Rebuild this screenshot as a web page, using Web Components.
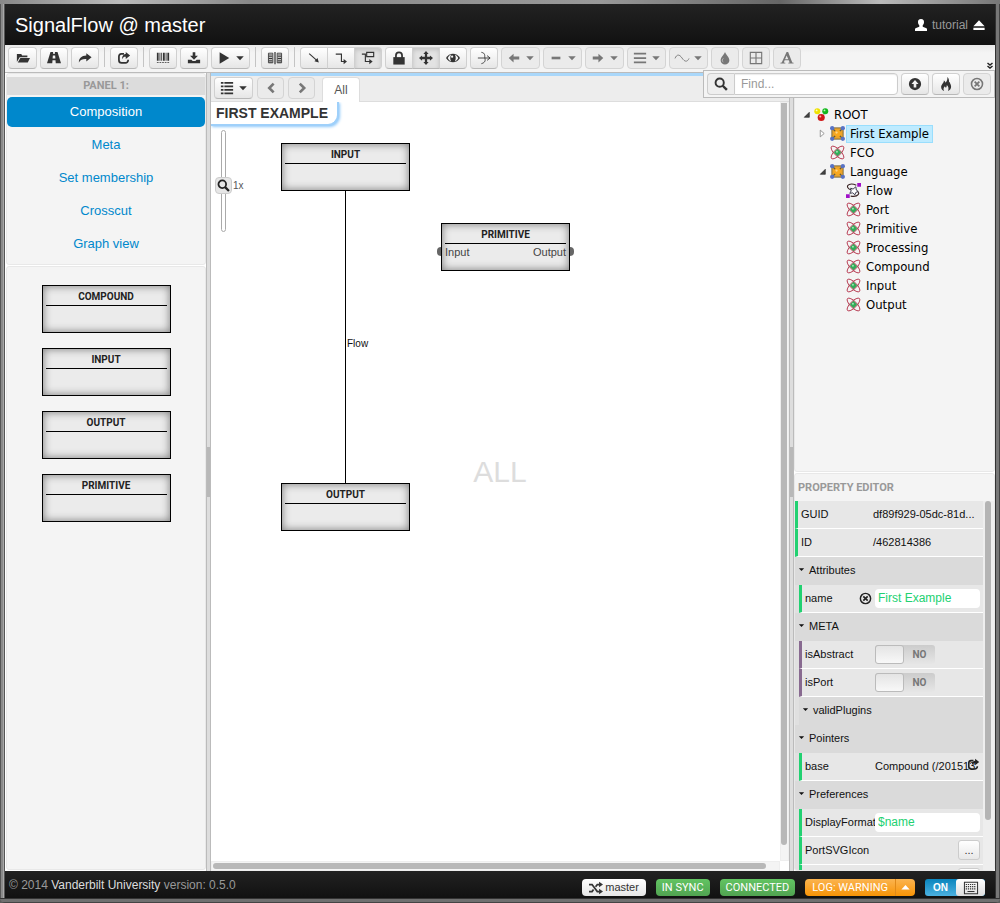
<!DOCTYPE html>
<html lang="en">
<head>
<meta charset="utf-8">
<title>SignalFlow @ master</title>
<style>
  html, body { height: 100%; margin: 0; }
  body { font: 12px/16px "Liberation Sans", Arial, sans-serif; color: #333; background: #5c5c5c; }
</style>
</head>
<body>
<sf-app></sf-app>
<script>
const define = (name, css, html, setup) => {
  const t = document.createElement('template');
  customElements.define(name, class extends HTMLElement {
    connectedCallback() {
      if (this.shadowRoot) return;
      t.innerHTML = `<style>*{box-sizing:border-box}:host{display:block;box-sizing:border-box}${css}</style>` +
        (typeof html === 'function' ? html(this) : html);
      this.attachShadow({ mode: 'open' }).appendChild(t.content.cloneNode(true));
      if (setup) setup(this);
    }
  });
};

/* ---------- icons, 16 x 16 grid ---------- */
const ATOM = `<g fill="none" stroke="#b5374f" stroke-width="1"><ellipse cx="8" cy="8" rx="9" ry="3.4" transform="rotate(45 8 8)"/><ellipse cx="8" cy="8" rx="9" ry="3.4" transform="rotate(-45 8 8)"/></g><path d="M8 4.5L11.5 8 8 11.5 4.5 8z" fill="#2fae58" stroke="#2f9a50"/><circle cx="7.4" cy="7.2" r="1" fill="#a5e8b8"/>`;
const ICONS = {
  folder: '<path d="M1 12.5V3.5h5l1 1.5h6v2H4.2z"/><path d="M5 8h11l-2.6 5H2z"/>',
  road: '<path d="M4 1h3l-.2 2h2.400L9 1h3l4 13H10l-.3-3.500H6.300L6 14H0zM6.700 5L6.400 8.500h3.200L9.300 5z" fill-rule="evenodd"/>',
  share: '<path d="M9.500 2.500L15.500 7.200 9.500 12V9.200C5.500 8.900 3 10 1 13 1 8.500 4 5.300 9.500 5.200z"/>',
  export: '<path d="M8 3.200H5A3 3 0 0 0 2.200 6v4.500a3 3 0 0 0 3 3h4.500a3 3 0 0 0 3-3V10" fill="none" stroke="currentColor" stroke-width="2"/><path d="M10 1l5 4-5 4V6.600C8 6.500 7 7 6 9.500 5.500 6 7.500 3.600 10 3.500z"/>',
  barcode: '<path d="M1 2h2v9H1zM4 2h1v9H4zM6 2h1v9H6zM8 2h2v9H8zM11 2h1v9h-1zM13 2h2v9h-2zM1 12.500h2v1H1zM4 12.500h2v1H4zM7 12.500h2v1H7zM10 12.500h2v1h-2zM13 12.500h2v1h-2z"/>',
  download: '<path d="M6.500 1.500h3v4h3L8 10 3.500 5.500h3z"/><path d="M1 10h4l1.500 1.500h3L11 10h4v4H1z"/>',
  play: '<path d="M3 1.500L14 8 3 14.500z"/>',
  columns: '<path d="M.5 2.500h5v11h-5zM10.500 2.500h5v11h-5z" fill="none" stroke="currentColor"/><path d="M7.300 1h1.400v14H7.300zM1 4h4v1H1zM1 6h4v1H1zM1 8h4v1H1zM1 10h4v1H1zM1 12h4v1H1zM11 4h4v1h-4zM11 6h4v1h-4zM11 8h4v1h-4zM11 10h4v1h-4zM11 12h4v1h-4z"/>',
  diag: '<path d="M2.500 3l9 8" fill="none" stroke="currentColor" stroke-width="1.200"/><path d="M13.500 13l-5-1.200L12 8z"/>',
  elbow: '<path d="M2 3.500h6.500v8.500H12" fill="none" stroke="currentColor" stroke-width="1.300"/><path d="M11 9l3.800 3-3.800 3z"/>',
  elbowbox: '<path d="M1 3.500h4v8.500h6M6.500 1.500h8v5h-8z" fill="none" stroke="currentColor" stroke-width="1.300"/><path d="M9.500 9l3.800 3-3.800 3z"/>',
  lock: '<path d="M1.500 7h13v8.500h-13z"/><path d="M4.500 8V5a3.500 3.500 0 0 1 7 0v3" fill="none" stroke="currentColor" stroke-width="2"/>',
  move: '<path d="M8 0l3 3.500H9.300v3.200h3.200V5L16 8l-3.500 3V9.300H9.300v3.200H11L8 16l-3-3.500h1.700V9.300H3.500V11L0 8l3.500-3v1.700h3.200V3.500H5z"/>',
  eye: '<path d="M0 8c3.500-6.500 12.500-6.500 16 0-3.500 6.500-12.500 6.500-16 0z"/><path d="M2 8c2-3.500 3-3.800 4-4-1.500 2-1.500 6 0 8-1.500-.5-3-2-4-4zM14 8c-1-2-2.500-3.500-4-4 1.500 2 1.500 6 0 8 1.500-.5 3-2 4-4z" fill="#f4f4f4"/><circle cx="7" cy="6.500" r="1.300" fill="#f4f4f4"/>',
  cross: '<path d="M1 8h13.500M5 1.500c5 1 3.500 4 4 6.500S10 13 5 14.500" fill="none" stroke="currentColor"/><path d="M11.500 5.300L15 8l-3.500 2.700" fill="none" stroke="currentColor"/>',
  left: '<path d="M7.500 3L2 8l5.500 5V9.800H14V6.200H7.500z"/>',
  right: '<path d="M8.500 3L14 8l-5.500 5V9.800H2V6.200h6.500z"/>',
  dash: '<path d="M3 6.500h10v3H3z"/>',
  bars: '<path d="M1 2h14v2H1zM1 7h14v2H1zM1 12h14v2H1z"/>',
  wave: '<path d="M0 8.500C2 3.500 5 3.500 8 8s6 5 8 .500" fill="none" stroke="currentColor"/>',
  drop: '<path d="M8 1c1 3 5 6 5 9.500a5 5 0 0 1-10 0C3 7 7 4 8 1z"/><path d="M6 8.500c-1.500 1.500-1.300 3.500 0 4" fill="none" stroke="#ccc"/>',
  grid: '<path d="M1.500 1.500h13v13h-13zM8 2v12M2 8h12" fill="none" stroke="currentColor" stroke-width="1.300"/>',
  letter: '<path d="M7.500 1h1.800L14 13l1.500.400v1H9.500v-1l1.500-.400-1-2.500H5.300L4.400 13l1.700.400v1H.500v-1L2 13zM7.600 5L5.800 9.500h3.700z" fill-rule="evenodd"/>',
  search: '<circle cx="6.500" cy="6.500" r="4.700" fill="none" stroke="currentColor" stroke-width="2.200"/><path d="M10 10l4.700 4.700" stroke="currentColor" stroke-width="2.800"/>',
  upcircle: '<path d="M8 1a7 7 0 1 0 0 14A7 7 0 0 0 8 1zM8 3.500L12 8H9.500v4h-3V8H4z" fill-rule="evenodd"/>',
  fire: '<path d="M9.500 0c.5 3-.5 5-2 6.500C7 5 6.300 4.200 5.500 4c.5 3-3.500 4.500-3 8 .2 2 1.500 3.500 3.500 4-1.500-2-.8-4 .8-5.500.2 1 .6 1.500 1.200 1.800.8-1.300 1-2.300.9-3.300 2 1.700 2.600 4.500 1.200 7 2.500-.8 4-3 3.700-5.500-.3-2.300-1.500-3-1.500-5-1 .6-1.300 1.500-1.300 2.500C12 5 11.500 1.500 9.500 0z"/>',
  remove: '<circle cx="8" cy="8" r="6.300" fill="none" stroke="currentColor" stroke-width="1.800"/><path d="M5.300 5.300l5.400 5.400M10.700 5.300l-5.400 5.400" stroke="currentColor" stroke-width="2"/>',
  list: '<path d="M1 1h3v2H1zM5 1h10v2H5zM1 5h3v2H1zM5 5h10v2H5zM1 9h3v2H1zM5 9h10v2H5zM1 13h3v2H1zM5 13h10v2H5z"/>',
  chevl: '<path d="M11 3L6 8l5 5" fill="none" stroke="currentColor" stroke-width="3"/>',
  chevr: '<path d="M5.500 3l5 5-5 5" fill="none" stroke="currentColor" stroke-width="3"/>',
  more: '<path d="M3 2l5 4 5-4M3 8l5 4 5-4" fill="none" stroke="currentColor" stroke-width="3"/>',
  user: '<path d="M8 0c3 0 4.300 2 4 4.700-.2 2-1 3-1.700 3.700v2c2 .8 5.200 1.500 5.700 2.600V16H0v-3c.5-1.100 3.700-1.800 5.700-2.600v-2C5 7.700 4.200 6.700 4 4.700 3.700 2 5 0 8 0z"/>',
  eject: '<path d="M8 1.500l7.500 8H.5zM.5 11.500h15v3H.5z"/>',
  random: '<path d="M0 4h3.500l6 8H12M0 12h3.500l1.700-2.300M7.500 6.500L9.500 4H12" fill="none" stroke="currentColor" stroke-width="2"/><path d="M11.500.8L16 4l-4.500 3.200zM11.500 8.800L16 12l-4.500 3.200z"/>',
  caret: '<path d="M2 5h12l-6 6.500z"/>',
  caretup: '<path d="M2 11h12L8 4.500z"/>',
  keyboard: '<path d="M.5 1.500h15v13H.5z" fill="none" stroke="currentColor" stroke-width="1.200"/><path d="M2 4h12M2 6.500h12M2 9h12" stroke="currentColor" stroke-width="1.300" stroke-dasharray="1.400 1"/><path d="M4 12h8" stroke="currentColor" stroke-width="1.300"/>',
  open: '<path d="M13 4v9H4z" fill="#444" stroke="#111"/>',
  closed: '<path d="M4 2l7 6-7 6z" fill="#fff" stroke="#888" stroke-width="1.500"/>',
  root: '<path d="M3 4l5 8 5-8" stroke="#999" fill="none"/><circle cx="3.500" cy="4.500" r="3.200" fill="#efe100"/><circle cx="12" cy="4.500" r="3.200" fill="#12b81c"/><circle cx="7.700" cy="11.200" r="3.800" fill="#d01818"/><circle cx="2.800" cy="3.600" r="1" fill="#fffcc0"/><circle cx="11.200" cy="3.600" r="1" fill="#b6ffb6"/><circle cx="6.700" cy="10.200" r="1.100" fill="#ffb0a8"/>',
  model: '<path d="M2 2h12v12H2z" fill="#eba42a" stroke="#77683c"/><path d="M2 2l12 12M14 2L2 14" stroke="#5c5748" stroke-width="1.500"/><circle cx="8" cy="8" r="3.400" fill="#f9a81e"/><circle cx="7" cy="7" r="1.200" fill="#ffd68a"/><g fill="#5873c4"><circle cx="2.300" cy="2.300" r="2.300"/><circle cx="13.700" cy="2.300" r="2.300"/><circle cx="2.300" cy="13.700" r="2.300"/><circle cx="13.700" cy="13.700" r="2.300"/></g>',
  atom: ATOM,
  flow: '<path d="M11 2.500C5-.500 0 2 2 5s3 1.500 5 2.500M9 8c3 .5 6 2 4 4.500s-5 2-8 1.500" fill="none" stroke="#3a2424" stroke-width="1.200"/><path d="M5 5.500l2.500 1 3-2.500.5 3.500 2 1.500-2.500 1-1 2.500-2.500-2-3 .5 1.500-2.500z" fill="#fff" stroke="#334"/><path d="M12 0h4v4h-4zM0 12h4v4H0z" fill="#a010c8"/>'
};
define('sf-icon', `:host{display:inline-block;flex:none;width:var(--s,14px);height:var(--s,14px)}svg{display:block;width:100%;height:100%;fill:currentColor;overflow:visible}`,
  h => `<svg viewBox="0 0 16 16" aria-hidden="true">${ICONS[h.getAttribute('name')]}</svg>`);

/* ---------- buttons ---------- */
define('sf-button', `
  :host{width:28px;height:22px}
  :host([menu]){width:39px}
  button{width:100%;height:100%;padding:0;display:flex;align-items:center;justify-content:center;gap:4px;
    border:1px solid #d0d0d0;border-bottom-color:#b8b8b8;border-radius:var(--r,4px);
    background:linear-gradient(#fff,#e6e6e6);color:#333;font:inherit}
  :host([pressed]) button{background:#e3e3e3;box-shadow:inset 0 2px 4px rgba(0,0,0,.15)}
  button:disabled{background:#ebebeb;border-color:#d4d4d4;color:#777}
  .c{--s:10px}`,
  h => `<button type="button" aria-label="${h.getAttribute('label') || h.getAttribute('icon')}" ${h.hasAttribute('disabled') ? 'disabled' : ''}>
    <sf-icon name="${h.getAttribute('icon')}"></sf-icon>${h.hasAttribute('menu') ? '<sf-icon class="c" name="caret"></sf-icon>' : ''}</button>`);
define('sf-group', `:host{display:flex}::slotted(*){--r:0;margin-right:-1px}::slotted(:first-child){--r:4px 0 0 4px}::slotted(:last-child){--r:0 4px 4px 0;margin-right:0}`, `<slot></slot>`);
define('sf-sep', `:host{width:1px;height:20px;background:#c4c4c4;margin:0 2px 0 2px}`, '');

/* ---------- header, toolbar, footer ---------- */
define('sf-header', `
  :host{display:flex;align-items:center;height:41px;padding:0 10px;background:linear-gradient(#222,#111);color:#fff}
  h1{margin:0;font-size:20px;line-height:24px;font-weight:normal;flex:1}
  .u{display:flex;align-items:center;gap:5px;--s:12px}a{color:#999;text-decoration:none}`,
  `<h1>SignalFlow @ master</h1><div class="u"><sf-icon name="user"></sf-icon><a href="#user">tutorial</a><sf-icon name="eject"></sf-icon></div>`);

define('sf-search', `
  :host{display:flex;gap:3px;align-items:center;padding:2px 3px;height:28px;background:#f4f4f4;border:1px solid #bbb}
  .f{display:flex;height:22px}
  label{width:27px;display:flex;align-items:center;justify-content:center;background:#eee;border:1px solid #ccc;border-right:0;border-radius:4px 0 0 4px}
  input{width:164px;padding:0 6px;border:1px solid #ccc;border-radius:0 4px 4px 0;font:inherit;box-shadow:inset 0 1px 1px rgba(0,0,0,.08);background:#fff}
  input::placeholder{color:#999}`,
  `<div class="f"><label for="q" aria-label="Find"><sf-icon name="search"></sf-icon></label><input id="q" type="text" placeholder="Find..."></div>
   <sf-button icon="upcircle"></sf-button><sf-button icon="fire"></sf-button><sf-button icon="remove" disabled></sf-button>`);

define('sf-toolbar', `
  :host{position:relative;display:flex;align-items:flex-start;gap:3px;height:28px;padding:2px 3px;background:linear-gradient(#e9e9e9,#f4f4f4 8px);border-bottom:1px solid #bbb}
  .first{width:29px}
  sf-search{position:absolute;right:0;top:25px;z-index:3}
  .more{position:absolute;right:1px;bottom:2px;--s:8px;width:8px;height:8px;padding:0;border:0;background:none;color:#222;display:flex}`,
  `<sf-button class="first" icon="folder"></sf-button><sf-button icon="road"></sf-button><sf-button icon="share"></sf-button><sf-sep></sf-sep>
   <sf-button icon="export"></sf-button><sf-sep></sf-sep>
   <sf-button icon="barcode"></sf-button><sf-button icon="download"></sf-button><sf-button icon="play" menu></sf-button><sf-sep></sf-sep>
   <sf-button icon="columns"></sf-button><sf-sep></sf-sep>
   <sf-group><sf-button icon="diag"></sf-button><sf-button icon="elbow"></sf-button><sf-button icon="elbowbox" pressed></sf-button></sf-group>
   <sf-group><sf-button icon="lock"></sf-button><sf-button icon="move" pressed></sf-button><sf-button icon="eye"></sf-button></sf-group>
   <sf-button icon="cross"></sf-button>
   <sf-button icon="left" menu disabled></sf-button><sf-button icon="dash" menu disabled></sf-button><sf-button icon="right" menu disabled></sf-button>
   <sf-button icon="bars" menu disabled></sf-button><sf-button icon="wave" menu disabled></sf-button>
   <sf-button icon="drop" disabled></sf-button><sf-button icon="grid" disabled></sf-button><sf-button icon="letter" disabled></sf-button>
   <button class="more" aria-label="More"><sf-icon name="more"></sf-icon></button><sf-search></sf-search>`);

define('sf-footer', `
  :host{display:flex;align-items:center;gap:10px;height:27px;padding:0 10px 0 4px;background:linear-gradient(#222,#111);color:#999}
  p{margin:0;flex:1}a{color:#ddd;text-decoration:none}
  button{display:flex;align-items:center;gap:2px;height:17px;margin:6px 0 0;padding:0 7px;border:0;border-radius:4px;font:11px/17px Roboto,sans-serif;color:#fff}
  .m{background:linear-gradient(#fff,#e6e6e6);color:#333;font-family:"Liberation Sans",Arial,sans-serif}
  .g{background:linear-gradient(#62c462,#51a351);padding:0 6px}
  .l{background:linear-gradient(#fbb450,#f89406)}
  .s{display:flex}.s .l:first-child{border-radius:4px 0 0 4px}.s .l+.l{border-radius:0 4px 4px 0;padding:0 4px;border-left:1px solid #e08a1a;--s:11px}
  label{position:relative;display:flex;width:60px;height:17px;margin-top:6px;border-radius:3px;overflow:hidden;background:linear-gradient(#0a85bd,#4bb0e0);color:#fff;font:bold 10px/17px "Liberation Sans",Arial,sans-serif}
  label span{width:31px;text-align:center}label b{flex:1;display:flex;align-items:center;justify-content:center;background:linear-gradient(#fff,#ddd);border-radius:3px;color:#333}
  input{position:absolute;inset:0;margin:0;opacity:0}`,
  `<p>© 2014 <a href="#vu">Vanderbilt University</a> version: 0.5.0</p>
   <button class="m"><sf-icon name="random"></sf-icon>master</button><button class="g">IN SYNC</button><button class="g">CONNECTED</button>
   <div class="s"><button class="l">LOG: WARNING</button><button class="l" aria-label="Log level"><sf-icon name="caretup"></sf-icon></button></div>
   <label><input type="checkbox" checked aria-label="Keyboard"><span>ON</span><b><sf-icon name="keyboard"></sf-icon></b></label>`);

/* ---------- model boxes ---------- */
define('sf-node', `
  :host{position:relative;width:129px;height:48px;padding:0 3px;border:1px solid #000;background:#ebebeb;box-shadow:inset 0 0 8px #777;color:#222}
  h3{margin:0;height:20px;border-bottom:1px solid #000;text-align:center;font:bold 10px/21px Roboto,sans-serif}
  div{display:flex;justify-content:space-between;font-size:11px;line-height:16px;color:#444}
  i{position:absolute;top:23px;width:4px;height:9px;background:#666}
  .a{left:-5px;border-radius:4px 0 0 4px}.b{right:-5px;border-radius:0 4px 4px 0}`,
  h => `<h3>${h.getAttribute('name')}</h3>` + (h.hasAttribute('ports') ? '<div><span>Input</span><span>Output</span></div><i class="a"></i><i class="b"></i>' : ''));

/* ---------- left column ---------- */
define('sf-left', `
  :host{display:flex;flex-direction:column;gap:1px;background:#fff;padding:0 0 1px 1px}
  section{background:#f4f4f4;border:1px solid #e8e8e8;border-radius:3px}
  h2{margin:3px 0 2px;background:#dcdcdc;color:#999;text-align:center;font:bold 11px/18px Roboto,sans-serif}
  nav{display:grid;gap:3px;padding-bottom:5px}
  a{font-size:13px;line-height:30px;text-align:center;color:#0088cc;text-decoration:none;border-radius:5px}
  a.on{background:#0088cc;color:#fff}
  .p{flex:1;display:flex;flex-direction:column;align-items:center;gap:15px;padding-top:18px}`,
  `<section><h2>PANEL 1:</h2><nav><a class="on" href="#c">Composition</a><a href="#m">Meta</a><a href="#s">Set membership</a><a href="#x">Crosscut</a><a href="#g">Graph view</a></nav></section>
   <section class="p"><sf-node name="COMPOUND"></sf-node><sf-node name="INPUT"></sf-node><sf-node name="OUTPUT"></sf-node><sf-node name="PRIMITIVE"></sf-node></section>`);

define('sf-splitter', `:host{display:flex;align-items:center;background:#ddd;border:solid #bbb;border-width:0 1px}i{width:100%;height:50px;background:#b8b8b8}`, `<i></i>`);

/* ---------- canvas ---------- */
define('sf-zoom', `
  :host{position:absolute;left:10px;top:28px;height:102px;width:5px;border:1px solid #aaa;border-radius:3px;background:#fff}
  input{position:absolute;left:-6px;top:0;width:17px;height:100px;margin:0;opacity:0;writing-mode:vertical-lr}
  b{position:absolute;left:-7px;top:46px;width:17px;height:17px;display:grid;place-items:center;border:1px solid #ccc;border-radius:4px;background:#e6e6e6;--s:13px;color:#222}
  span{position:absolute;left:11px;top:47px;font-size:10px;color:#555}`,
  `<b><sf-icon name="search"></sf-icon></b><span>1x</span><input type="range" aria-label="Zoom" min="0" max="10" value="5">`);

define('sf-center', `
  :host{position:relative;display:grid;grid-template-rows:29px 1fr;background:#fff;min-width:0}
  header{display:flex;align-items:flex-end;gap:4px;padding:0 3px;background:#ededed;border-top:3px solid #a9d7fa;border-bottom:1px solid #ddd}
  header sf-button{margin-bottom:2px;--s:14px}
  header sf-button[disabled]{width:27px}
  .tab{margin:0 0 -1px 3px;width:38px;height:25px;background:#fff;border:1px solid #ddd;border-bottom:0;border-radius:4px 4px 0 0;font:12px/23px "Liberation Sans",Arial,sans-serif;color:#555;padding:0}
  .body{display:grid;grid-template-columns:1fr 9px;grid-template-rows:1fr 10px;min-height:0}
  .canvas{position:relative;overflow:hidden}
  h2{display:inline-block;margin:0;padding:0 9px 0 5px;font-size:14px;line-height:22px;font-weight:bold;background:#fff;border-radius:0 0 11px 0;border:solid #9fd0fa;border-width:0 2px 2px 0;box-shadow:1px 1px 3px #8ec8fa}
  .line{position:absolute;left:134px;top:89px;width:1px;height:292px;background:#000}
  .flow{position:absolute;left:136px;top:235px;font-size:10px;line-height:14px;color:#111}
  sf-node{position:absolute}
  .all{position:absolute;inset:0;display:grid;place-items:center;pointer-events:none;font-size:30px;line-height:36px;color:#ddd}
  .v,.h{background:#f4f4f4;border:1px solid #eee}.v{padding:0 0 15px 0}
  .v i,.h i{display:block;background:#b8b8b8;border-radius:3px}
  .v i{height:100%;width:6px;border-radius:0 0 3px 3px}.h{padding:1px 13px 0 1px}.h i{height:6px}`,
  `<header><sf-button icon="list" menu></sf-button><sf-button icon="chevl" disabled></sf-button><sf-button icon="chevr" disabled></sf-button><button class="tab">All</button></header>
   <div class="body"><div class="canvas"><h2>FIRST EXAMPLE</h2><sf-zoom></sf-zoom>
   <i class="line"></i><span class="flow">Flow</span>
   <sf-node style="left:70px;top:41px" name="INPUT"></sf-node>
   <sf-node style="left:230px;top:121px" name="PRIMITIVE" ports></sf-node>
   <sf-node style="left:70px;top:381px" name="OUTPUT"></sf-node></div>
   <div class="v"><i></i></div><div class="h"><i></i></div></div><div class="all">ALL</div>`);

/* ---------- tree ---------- */
define('sf-item', `
  :host{display:flex;align-items:center;height:19px;font:13px/16px "DejaVu Sans Condensed","Noto Sans",sans-serif;color:#000;--s:15px}
  :host([level="1"]){padding-left:16px}:host([level="2"]){padding-left:32px}
  .t{width:16px;display:flex;justify-content:center;--s:9px}
  a{color:inherit;text-decoration:none;margin-left:1px;padding:0 3px;border:1px solid transparent;white-space:nowrap}
  :host([selected]) a{background:#beebff;border-color:#99defd}`,
  h => `<span class="t">${h.hasAttribute('toggle') ? `<sf-icon name="${h.getAttribute('toggle')}"></sf-icon>` : ''}</span><sf-icon name="${h.getAttribute('icon')}"></sf-icon><a href="#n"><slot></slot></a>`);

/* ---------- property rows ---------- */
define('sf-group-row', `:host{height:28px;padding:0 0 2px 3px;display:flex;align-items:center;gap:4px;background:#dadada;font-size:11px;--s:7px;color:#111}:host([nested]){margin-left:4px}`,
  `<sf-icon name="caret"></sf-icon><slot></slot>`);
define('sf-prop', `
  :host{display:flex;align-items:center;height:28px;padding:0 3px;background:#e7e7e7;border-left:3px solid #22d171;border-bottom:1px solid #fff;font-size:11px;color:#111}
  :host([nested]){margin-left:4px}:host([kind=switch]){border-left-color:#886a90}
  label.k{flex:none;width:70px;white-space:nowrap}
  :host(:not([nested])) label.k{width:72px}
  :host([clear]) label.k{width:54px}
  .x{flex:none;--s:13px;width:16px;padding:0;margin:0;border:0;background:none;display:flex;color:#222}
  .v{flex:1;min-width:0;white-space:nowrap;position:relative}
  .v button{position:absolute;right:0;top:0;padding:0;border:0;background:none;--s:13px;color:#222;display:flex}
  input.t{flex:1;min-width:0;height:19px;padding:0 3px;border:0;border-radius:4px;background:#fff;font:12px/19px "Liberation Sans",Arial,sans-serif;color:#22d171}
  .sw{position:relative;display:flex;width:60px;height:19px;background:linear-gradient(#ccc,#e6e6e6);border-radius:3px;font:bold 10px/19px Roboto,sans-serif;color:#777}
  .sw i{width:29px;border:1px solid #bbb;border-radius:3px;background:linear-gradient(#e4e4e4,#f8f8f8)}.sw span{flex:1;text-align:center}
  .sw input{position:absolute;inset:0;margin:0;opacity:0}
  .d{margin-left:auto;width:22px;height:20px;padding:0;border:1px solid #ccc;border-radius:3px;background:linear-gradient(#fff,#e8e8e8);font:11px/18px "Liberation Sans",Arial,sans-serif;color:#333}`,
  h => {
    const k = h.getAttribute('kind'), v = h.getAttribute('value') || '';
    const body = {
      text: `<input class="t" id="f" type="text" value="${v}">`,
      switch: `<span class="sw"><i></i><span>NO</span><input id="f" type="checkbox"></span>`,
      dialog: `<button class="d" id="f" type="button">${v}</button>`,
      ref: `<output class="v" id="f">${v}<button aria-label="Follow"><sf-icon name="export"></sf-icon></button></output>`
    }[k] || `<output class="v" id="f">${v}</output>`;
    return `<label class="k" for="f">${h.getAttribute('name') || ''}</label>${h.hasAttribute('clear') ? '<button class="x" aria-label="Reset"><sf-icon name="remove"></sf-icon></button>' : ''}${body}`;
  });

define('sf-right', `
  :host{display:grid;grid-template-rows:1fr 1fr;gap:1px;background:#fff;min-height:0}
  section{background:#f4f4f4;border:1px solid #e8e8e8;border-radius:3px;min-height:0}
  .tree{padding:31px 0 0 3px}
  .props{display:flex;flex-direction:column;overflow:hidden}
  h2{margin:0;padding:0 3px;color:#999;font:bold 11px/27px Roboto,sans-serif;flex:none}
  .b{flex:1;min-height:0;display:grid;grid-template-columns:1fr 11px;overflow:hidden}
  .rows{overflow:hidden;min-width:0;background:#e0e0e0}
  .sb{padding:0 3px 50px 2px;background:#eee}.sb i{display:block;height:100%;background:#b4b4b4;border-radius:3px}`,
  `<section class="tree">
    <sf-item toggle="open" icon="root">ROOT</sf-item><sf-item level="1" toggle="closed" icon="model" selected>First Example</sf-item>
    <sf-item level="1" icon="atom">FCO</sf-item><sf-item level="1" toggle="open" icon="model">Language</sf-item>
    <sf-item level="2" icon="flow">Flow</sf-item><sf-item level="2" icon="atom">Port</sf-item><sf-item level="2" icon="atom">Primitive</sf-item>
    <sf-item level="2" icon="atom">Processing</sf-item><sf-item level="2" icon="atom">Compound</sf-item><sf-item level="2" icon="atom">Input</sf-item><sf-item level="2" icon="atom">Output</sf-item>
   </section>
   <section class="props"><h2>PROPERTY EDITOR</h2><div class="b"><div class="rows">
    <sf-prop name="GUID" value="df89f929-05dc-81d..."></sf-prop><sf-prop name="ID" value="/462814386"></sf-prop>
    <sf-group-row>Attributes</sf-group-row><sf-prop nested kind="text" clear name="name" value="First Example"></sf-prop>
    <sf-group-row>META</sf-group-row><sf-prop nested kind="switch" name="isAbstract"></sf-prop><sf-prop nested kind="switch" name="isPort"></sf-prop>
    <sf-group-row nested>validPlugins</sf-group-row>
    <sf-group-row>Pointers</sf-group-row><sf-prop nested kind="ref" name="base" value="Compound (/201513"></sf-prop>
    <sf-group-row>Preferences</sf-group-row><sf-prop nested kind="text" name="DisplayFormat" value="$name"></sf-prop><sf-prop nested kind="dialog" name="PortSVGIcon" value="..."></sf-prop>
    <sf-prop nested kind="dialog"></sf-prop>
   </div><div class="sb"><i></i></div></div></section>`);

define('sf-app', `
  :host{display:grid;grid-template-rows:auto auto 1fr auto;height:100vh;padding:4px 5px 5px;border-radius:0 0 5px 5px;
    background:linear-gradient(90deg,#555 0 1px,#8a8a8a 1px 3px,#a8a8a8 3px 4px,#555 4px 5px,transparent 5px calc(100% - 5px),#333 calc(100% - 5px) calc(100% - 4px),#777 calc(100% - 4px) calc(100% - 1px),#444 calc(100% - 1px)) 0 4px/100% calc(100% - 9px) no-repeat,
    linear-gradient(#333 0 1px,#707070 1px 4px,#444 4px) 0 100%/100% 5px no-repeat,
    linear-gradient(90deg,#888,#bbb 12%,#888 25%,#999 60%,#666 78%,#bbb 88%,#777)}
  main{display:grid;grid-template-columns:201px 5px 1fr 5px 201px;min-height:0}
  main>*{min-height:0}`,
  `<sf-header></sf-header><sf-toolbar></sf-toolbar><main><sf-left></sf-left><sf-splitter></sf-splitter><sf-center></sf-center><sf-splitter></sf-splitter><sf-right></sf-right></main><sf-footer></sf-footer>`);
</script>
</body>
</html>
